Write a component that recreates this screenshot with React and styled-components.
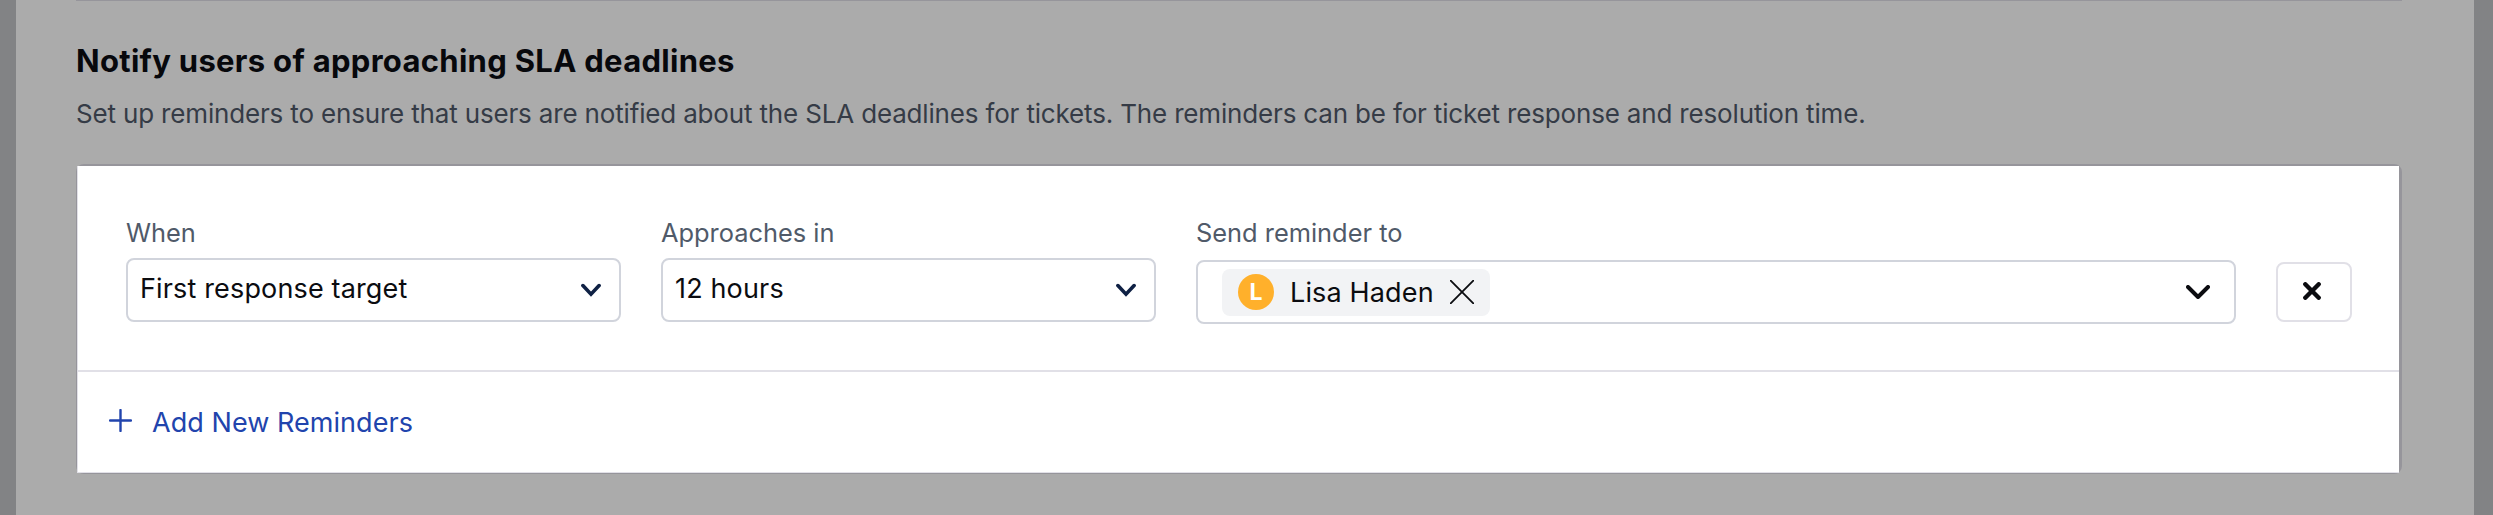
import React from "react";
import styled, { createGlobalStyle } from "styled-components";

const GlobalStyle = createGlobalStyle`
  * { box-sizing: border-box; }
  body { margin: 0; background: #828385; font-family: Inter, "Liberation Sans", sans-serif; }
  button { font: inherit; cursor: pointer; }
`;

const Page = styled.main`
  width: 2493px;
  height: 515px;
  padding: 0 19px 0 16px;
  background: #828385;
  overflow: hidden;
`;

const Panel = styled.section`
  height: 515px;
  padding: 0 72px 0 60px;
  background: #ababab;
`;

const Header = styled.header`
  height: 164px;
  padding-top: 40px;
  border-top: 1px solid #96959b;
`;

const Title = styled.h2`
  margin: 0;
  font-size: 31px;
  line-height: 40px;
  font-weight: 700;
  letter-spacing: 0.3px;
  color: #07080c;
`;

const Description = styled.p`
  margin: 15px 0 0 0;
  font-size: 26px;
  line-height: 36px;
  letter-spacing: -0.165px;
  color: #353b46;
`;

const Card = styled.div`
  height: 310px;
  border: solid #96959b;
  border-width: 2px 3px 1px 1px;
  border-radius: 8px;
`;

const CardBody = styled.div`
  height: 307px;
  background: #fff;
  box-shadow: inset 1px -1px 0 #e1e0e7;
`;

const ReminderRow = styled.div`
  display: grid;
  grid-template-columns: 495px 495px 1040px 76px;
  column-gap: 40px;
  height: 206px;
  padding: 50px 0 0 49px;
  border-bottom: 2px solid #e1e0e7;
`;

const Field = styled.div`
  display: flex;
  flex-direction: column;
`;

const Label = styled.label`
  height: 32px;
  margin: 1px 0 ${(p) => p.$gap || 9}px 0;
  font-size: 25.4px;
  line-height: 32px;
  color: #505a69;
`;

const Select = styled.div`
  display: flex;
  align-items: center;
  justify-content: space-between;
  height: 64px;
  padding: 0 18px 0 12px;
  border: 2px solid #d1d4dc;
  border-radius: 8px;
  background: #fff;
`;

const Value = styled.span`
  margin-bottom: 3px;
  font-size: 27px;
  line-height: 36px;
  letter-spacing: 0.15px;
  color: #0b0c10;
`;

const MultiSelect = styled(Select)`
  padding: 0 24px;
`;

const Chip = styled.div`
  display: flex;
  align-items: center;
  width: 268px;
  height: 47px;
  padding-left: 16px;
  border-radius: 8px;
  background: #f2f3f5;
`;

const Avatar = styled.span`
  display: flex;
  align-items: center;
  justify-content: center;
  width: 36px;
  height: 36px;
  margin-right: 16px;
  border-radius: 50%;
  background: #ffb02b;
  color: #fff;
  font-size: 23px;
  font-weight: 700;
`;

const ChipName = styled.span`
  width: 160px;
  padding-top: 1px;
  font-size: 27px;
  line-height: 36px;
  letter-spacing: 0.15px;
  color: #0b0c10;
`;

const RemoveButton = styled.button`
  display: flex;
  align-items: center;
  justify-content: center;
  width: 76px;
  height: 60px;
  margin-top: 46px;
  padding: 0 4px 3px 0;
  border: 2px solid #e1e0e7;
  border-radius: 8px;
  background: #fff;
`;

const AddButton = styled.button`
  display: flex;
  align-items: center;
  height: 102px;
  padding: 0 0 0 32px;
  border: 0;
  background: transparent;
  color: #2144ad;
  font-size: 27px;
  line-height: 36px;
  letter-spacing: 0.05px;

  svg { margin: 0 20px 6px 0; }
`;

const Icon = styled.svg`
  display: block;
  flex: none;
  fill: none;
  stroke: ${(p) => p.$color || "currentColor"};
  stroke-width: ${(p) => p.$weight};
  stroke-linecap: round;
  stroke-linejoin: ${(p) => p.$join || "miter"};
`;

const SelectChevron = () => (
  <Icon width="20" height="14" viewBox="0 0 20 14" $weight={3.6} $color="#0f2144">
    <path d="M1.9 2.6 10 11.2 18.1 2.6" />
  </Icon>
);

const WideChevron = () => (
  <Icon width="24" height="14" viewBox="0 0 24 14" $weight={4} $color="#0b0c10" $join="round">
    <path d="M2 2 12 12 22 2" />
  </Icon>
);

const ThinCross = () => (
  <Icon width="24" height="24" viewBox="0 0 24 24" $weight={1.8} $color="#0b0c10">
    <path d="M.7.7 23.3 23.3M23.3.7.7 23.3" />
  </Icon>
);

const BoldCross = () => (
  <Icon width="18" height="18" viewBox="0 0 18 18" $weight={4.4} $color="#0b0c10">
    <path d="M2.3 2.3 15.7 15.7M15.7 2.3 2.3 15.7" />
  </Icon>
);

const Plus = () => (
  <Icon width="23" height="23" viewBox="0 0 23 23" $weight={2.4}>
    <path d="M11.5 1V22M1 11.5H22" />
  </Icon>
);

export default function App() {
  return (
    <Page>
      <GlobalStyle />
      <Panel>
        <Header>
          <Title>Notify users of approaching SLA deadlines</Title>
          <Description>
            Set up reminders to ensure that users are notified about the SLA deadlines for tickets. The reminders can be for ticket response and resolution time.
          </Description>
        </Header>
        <Card>
          <CardBody>
            <ReminderRow>
              <Field>
                <Label>When</Label>
                <Select>
                  <Value>First response target</Value>
                  <SelectChevron />
                </Select>
              </Field>
              <Field>
                <Label>Approaches in</Label>
                <Select>
                  <Value>12 hours</Value>
                  <SelectChevron />
                </Select>
              </Field>
              <Field>
                <Label $gap={11}>Send reminder to</Label>
                <MultiSelect>
                  <Chip>
                    <Avatar>L</Avatar>
                    <ChipName>Lisa Haden</ChipName>
                    <ThinCross />
                  </Chip>
                  <WideChevron />
                </MultiSelect>
              </Field>
              <RemoveButton aria-label="Remove reminder">
                <BoldCross />
              </RemoveButton>
            </ReminderRow>
            <AddButton>
              <Plus />
              Add New Reminders
            </AddButton>
          </CardBody>
        </Card>
      </Panel>
    </Page>
  );
}
